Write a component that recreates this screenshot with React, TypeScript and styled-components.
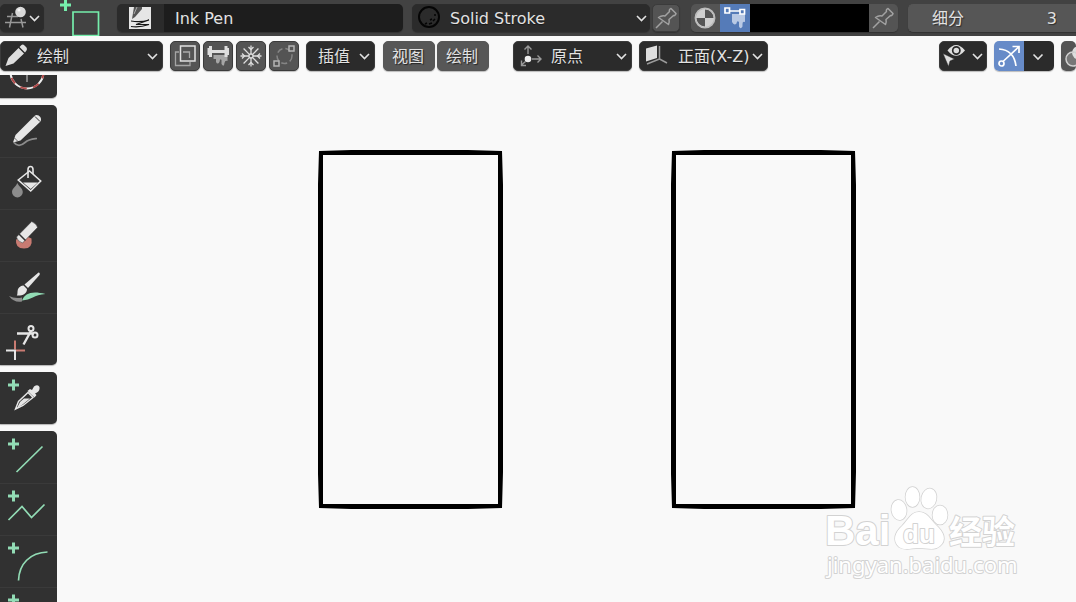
import React from "react";
import styled, { createGlobalStyle, css } from "styled-components";

const GlobalStyle = createGlobalStyle`
  *, *::before, *::after { box-sizing: border-box; }
  body { margin: 0; background: #f9f9f9; }
  body, button, input, select {
    font-family: "DejaVu Sans", "Noto Sans CJK SC", sans-serif;
    font-size: 16px;
    line-height: 20px;
  }
`;

/* ---------- layout ---------- */

const Page = styled.div`
  display: flex;
  flex-direction: column;
  height: 100vh;
  overflow: hidden;
  color: #e2e2e2;
`;

const TopBar = styled.header`
  display: flex;
  flex: none;
  align-items: flex-start;
  height: 36px;
  padding-top: 4px;
  background: #424242;
  overflow: hidden;
`;

const ViewHeader = styled.nav`
  display: flex;
  flex: none;
  align-items: flex-start;
  height: 39px;
  padding-top: 5px;
  overflow: hidden;
`;

const Cluster = styled.div<{ $gap?: number; $left?: number }>`
  display: flex;
  flex: none;
  gap: ${(p) => p.$gap ?? 0}px;
  margin-left: ${(p) => p.$left ?? 7}px;
`;

const RightCluster = styled(Cluster)`
  margin-left: auto;
`;

const Workspace = styled.div`
  display: flex;
  flex: 1;
  min-height: 0;
`;

const Toolbar = styled.aside`
  display: flex;
  flex: none;
  flex-direction: column;
  justify-content: flex-start;
  width: 57px;
  overflow: hidden;
`;

const ToolList = styled.div`
  display: flex;
  flex-direction: column;
  gap: 7px;
  margin-top: -29px;
`;

const ToolGroup = styled.div`
  display: flex;
  flex: none;
  flex-direction: column;
  background: #313131;
  border-radius: 0 5px 5px 0;
  box-shadow: 0 1px 1px #b4b4b4;
  overflow: hidden;
`;

const Tool = styled.button`
  display: block;
  height: 52px;
  padding: 0;
  border: 0;
  background: transparent;
  & + & { box-shadow: inset 0 1px 0 #3a3a3a; }
  svg { display: block; }
`;

const Viewport = styled.main`
  position: relative;
  flex: 1;
  min-width: 0;
`;

const Drawing = styled.svg`
  display: block;
  width: 100%;
  height: 100%;
`;

const Watermark = styled.svg`
  position: absolute;
  right: 52px;
  bottom: 16px;
`;

/* ---------- controls ---------- */

const frame = css`
  display: flex;
  align-items: center;
  flex: none;
  border: 1px solid #3b3b3b;
  border-radius: 5px;
  box-shadow: 0 1px 1px rgba(0, 0, 0, 0.25);
  overflow: hidden;
`;

const MenuBox = styled.label<{ $w: number; $h?: number; $flat?: boolean }>`
  ${frame}
  position: relative;
  width: ${(p) => p.$w}px;
  height: ${(p) => p.$h ?? 30}px;
  border-color: ${(p) => (p.$flat ? "#2c2c2c" : "#3b3b3b")};
  background: #2b2b2b;
  > svg { flex: none; pointer-events: none; }
`;

const Menu = styled.select<{ $pad: number }>`
  appearance: none;
  flex: 1;
  min-width: 0;
  height: 100%;
  padding: 2px 0 0 ${(p) => p.$pad}px;
  border: 0;
  background: transparent;
  color: #e2e2e2;
  text-shadow: 0 1px 1px rgba(0, 0, 0, 0.5);
  outline: 0;
`;

const IconButton = styled.button<{ $w?: number; $h?: number; $bg?: string }>`
  ${frame}
  justify-content: flex-start;
  width: ${(p) => p.$w ?? 30}px;
  height: ${(p) => p.$h ?? 30}px;
  padding: 0;
  background: ${(p) => p.$bg ?? "#545454"};
  svg { flex: none; margin: -1px; }
`;

const TextButton = styled.button`
  ${frame}
  justify-content: center;
  width: 52px;
  height: 30px;
  padding: 1px 2px 0 0;
  border-color: #575757;
  background: #575757;
  color: #e2e2e2;
  text-shadow: 1px 1px 1px rgba(0, 0, 0, 0.6);
`;

const Joined = styled.div<{ $w: number; $h?: number }>`
  ${frame}
  align-items: stretch;
  width: ${(p) => p.$w}px;
  height: ${(p) => p.$h ?? 28}px;
  border: 0;
`;

const Segment = styled.button<{ $w: number; $bg: string }>`
  display: flex;
  flex: none;
  align-items: center;
  width: ${(p) => p.$w}px;
  padding: 0;
  border: 0;
  background: ${(p) => p.$bg};
`;

const TextField = styled.input<{ $bg: string }>`
  flex: 1;
  min-width: 0;
  padding: 2px 11px 0;
  border: 0;
  background: ${(p) => p.$bg};
  color: #e2e2e2;
  outline: 0;
`;

const NumberField = styled.label`
  ${frame}
  flex: 1 0 168px;
  justify-content: space-between;
  height: 28px;
  margin-left: 10px;
  padding: 2px 19px 0 23px;
  border-color: #565656;
  border-right: 0;
  border-radius: 5px 0 0 5px;
  background: #565656;
  text-shadow: 1px 1px 1px rgba(0, 0, 0, 0.5);
`;

const NumberInput = styled.input`
  width: 60px;
  padding: 0;
  border: 0;
  background: transparent;
  color: inherit;
  text-align: right;
  text-shadow: inherit;
  outline: 0;
`;

/* ---------- icons ---------- */

const IconSvg = styled.svg`
  overflow: visible;
`;

type IconProps = { w?: number; h?: number; children: React.ReactNode };
const Icon = ({ w = 30, h = 30, children }: IconProps) => (
  <IconSvg width={w} height={h} viewBox={`0 0 ${w} ${h}`} fill="none" aria-hidden="true">
    {children}
  </IconSvg>
);

const Chevron = ({ w = 15 }: { w?: number }) => (
  <Icon w={w} h={28}>
    <path d="M1 12l4.500 4.500 4.500-4.500" stroke="#e2e2e2" strokeWidth="1.600" />
  </Icon>
);

const Pin = () => (
  <Icon h={28}>
    <path
      d="M4 24L10.500 17.500M6.500 13.500L16.500 20.500C17.500 18.500 17.500 17.500 17 15.500L21.500 11.500C22.500 12 23.500 11 24 9.500L19 4.500C17.500 5 17 6.500 17.500 7.500L13 12C11 11.300 8.500 12 6.500 13.500Z"
      stroke="#a2a2a2" strokeWidth="1.500" strokeLinejoin="round"
    />
  </Icon>
);

const Plus = ({ x = 13.5, y = 13 }: { x?: number; y?: number }) => (
  <path d={`M${x - 5.5} ${y}h11M${x} ${y - 5.5}v11`} stroke="#92dcb5" strokeWidth="3" />
);

const white = "#e6e6e6";
const grey = "#8c8c8c";
const red = "#c97b72";
const green = "#92dcb5";

const ToolIcon = ({ children }: { children: React.ReactNode }) => (
  <Icon w={57} h={52}>{children}</Icon>
);

const paintTools = [
  {
    name: "绘制",
    art: (
      <>
        <path d="M14 37.500C17 41.500 21 41 25 37.500C29 34 33 34 37 33.500" stroke={grey} strokeWidth="1.700" />
        <path d="M13 37.500L15.500 30 34.500 11C37 8 43 12.500 40.500 16.500L20.500 35.500Z" fill={white} />
        <path d="M35 11.500L40 16.500" stroke="#313131" />
        <path d="M14.500 33L17.500 36" stroke="#313131" strokeWidth=".7" />
      </>
    ),
  },
  {
    name: "填充",
    art: (
      <>
        <path d="M17.300 26C19 30 22.800 31 22.800 35A5.300 5.300 0 0 1 12 35C12 31 16 30 17.300 26Z" fill={grey} />
        <path d="M29.500 14L18.300 23 30.700 34 40.700 24Z" stroke={white} strokeWidth="1.600" />
        <path d="M23 25.500H38L30.700 32Z" fill={white} />
        <path d="M28 21V12.500C28 8.500 33 8.500 33 12.500V17" stroke={white} strokeWidth="1.600" />
      </>
    ),
  },
  {
    name: "擦除",
    art: (
      <>
        <path d="M16 30.500Q15 39.500 24 39.500Q33 39.500 31.500 29.500L28 28Z" fill={red} />
        <path d="M31.700 12.500Q37 15 37.500 18.500L22.500 34Q17 32 16.500 28Z" fill={white} stroke="#313131" strokeWidth=".5" />
        <path d="M19 25L25.500 31.500" stroke="#313131" strokeWidth="1.500" />
      </>
    ),
  },
  {
    name: "染色",
    art: (
      <>
        <path d="M9 35Q15 38 22 36.500V40.500Q14 42 9 35Z" fill={grey} />
        <path d="M22 39.500C25 32 32 29.500 45.500 33C34 34 31 39 22 39.500Z" fill={green} />
        <path d="M38.500 11.500Q40.500 12 39.500 14L28 27 24.500 23.500Z" fill={white} />
        <path d="M23.500 24.500L27 28C27 33 22 35 16.800 34.500C18 33 17 31 18 28Q20 24.500 23.500 24.500Z" fill={white} />
      </>
    ),
  },
  {
    name: "切割",
    art: (
      <>
        <path d="M17 20.500L34 20.500M23.500 31.500L31 18" stroke={white} strokeWidth="2.400" />
        <circle cx="31" cy="15.500" r="2.500" stroke={white} strokeWidth="2" />
        <circle cx="35" cy="22" r="2.500" stroke={white} strokeWidth="2" />
        <path d="M15 27.500v9M16 37.500h9" stroke={red} strokeWidth="2" />
        <path d="M6 37.500h9v9.500" stroke={white} strokeWidth="2" />
      </>
    ),
  },
];

const shapeTools = [
  { name: "直线", art: <path d="M16.500 41L42.500 15.500" stroke={green} strokeWidth="1.700" /> },
  { name: "折线", art: <path d="M8.500 37L22 23.500 31.500 34.500 44.500 21.500" stroke={green} strokeWidth="1.700" /> },
  { name: "弧线", art: <path d="M18.500 45.500C19 29 30 17.500 47.500 17" stroke={green} strokeWidth="1.700" /> },
  { name: "曲线", art: null },
];

/* A hand-drawn ink rectangle whose edges swell slightly between corners. */
const InkFrame = ({ x }: { x: number }) => (
  <path
    transform={`translate(${x} 75)`}
    fillRule="evenodd"
    d="M1 1L33 0H150L184 1 185 35V322L184 358 150 359H33L1 358 0 324V34ZM5 5V354H180V5Z"
  />
);

export default function App() {
  return (
    <Page>
      <GlobalStyle />
      <TopBar>
        <MenuBox $w={44} $h={28} $flat>
          <Icon w={27} h={28}>
            <path d="M6 12.500H17M4 18.500H25M11.500 9L8.500 23.500M20 15L22 23.500" stroke="#989898" strokeWidth="1.500" />
            <circle cx="19.500" cy="8" r="5.300" fill="#d8d8d8" />
            <circle cx="18" cy="6" r="1.500" fill="#f5f5f5" />
          </Icon>
          <Menu $pad={0} aria-label="编辑器类型"><option aria-label="3D" /></Menu>
          <Chevron w={14} />
        </MenuBox>
        <Cluster $left={15}>
          <Icon w={42} h={32}>
            <path d="M1 1h11M6.500 -5v12" stroke="#76eeac" strokeWidth="3" />
            <path d="M14 34V8H39.500V31.500H14" stroke="#76eeac" strokeWidth="1.700" />
          </Icon>
        </Cluster>
        <Cluster $left={16}>
          <Joined $w={286}>
            <Segment $w={47} $bg="#2b2b2b" aria-label="笔刷">
              <Icon w={46} h={28}>
                <path d="M12 3H34V25H12Z" fill="#e6e6e6" />
                <path d="M17 3L15.500 12 15 15 18 13 25 5V3Z" fill="#555" />
                <path d="M20 3L17 10" stroke="#aaa" />
                <path d="M14 17Q24 18.500 32 16L19 20.500 32 20.500Q22 24 14 22.500" stroke="#151515" strokeWidth="1.200" />
              </Icon>
            </Segment>
            <TextField $bg="#1d1d1d" aria-label="笔刷名称" defaultValue="Ink Pen" />
          </Joined>
        </Cluster>
        <Cluster $left={9} $gap={2}>
          <MenuBox $w={238} $h={28} $flat>
            <Icon w={32} h={28}>
              <circle cx="16" cy="13" r="10" stroke="#050505" strokeWidth="2" />
              <path d="M12 20l2-1M16 20l3-1M20 17l2-2M22 12v-2M17 16l2-1" stroke="#050505" strokeWidth="1.500" />
            </Icon>
            <Menu $pad={5} aria-label="材质"><option>Solid Stroke</option></Menu>
            <Chevron w={13} />
          </MenuBox>
          <IconButton $w={28} $h={28} aria-label="固定材质"><Pin /></IconButton>
        </Cluster>
        <Cluster $left={11}>
          <Joined $w={207}>
            <Segment $w={29} $bg="#545454" aria-label="材质颜色">
              <Icon w={29} h={28}>
                <circle cx="14" cy="14" r="9.500" fill="#cfcfcf" />
                <path d="M14 14V5.500A8.500 8.500 0 0 1 22.500 14ZM14 14V22.500A8.500 8.500 0 0 1 5.500 14Z" fill="#555" />
                <circle cx="14" cy="14" r="9.700" stroke="#bcbcbc" strokeWidth="1.500" />
              </Icon>
            </Segment>
            <Segment $w={30} $bg="#557bb8" aria-label="顶点颜色">
              <Icon h={28}>
                <path d="M12 10H25V18Q22.500 17 22.500 20V22.500Q20.500 26 19 22.500V18Q17 16 16.500 19.500Q14 22 12 18Z" fill="#b9c9e4" />
                <path d="M10 7H20" stroke="#fff" strokeWidth="1.500" />
                <path d="M5 4H9.500V9H5ZM20 5.500H24.500V10H20Z" fill="#557bb8" stroke="#fff" strokeWidth="1.700" />
              </Icon>
            </Segment>
            <TextField $bg="#000" aria-label="颜色" defaultValue="" />
            <Segment $w={29} $bg="#545454" aria-label="固定颜色"><Pin /></Segment>
          </Joined>
        </Cluster>
        <NumberField>
          细分
          <NumberInput defaultValue="3" />
        </NumberField>
      </TopBar>

      <ViewHeader>
        <MenuBox $w={163}>
          <Icon w={31}>
            <path d="M4.500 25L7.500 17 17.500 7 23 12.500 12.500 22.500ZM18.500 6L20.500 4Q22 3 23.500 4.500L25.500 6.500Q26.500 8 25.500 9.500L24 11.500Z" fill="#dedede" />
          </Icon>
          <Menu $pad={5} aria-label="模式"><option>绘制</option></Menu>
          <Chevron />
        </MenuBox>
        <Cluster $gap={3}>
          <IconButton aria-label="叠加绘制">
            <Icon>
              <path d="M9 11H5.500V24.500H20V21" stroke="#a5a5a5" strokeWidth="1.300" />
              <path d="M10.500 5H25V20H10.500Z" stroke="#e0e0e0" strokeWidth="1.500" />
              <path d="M13 11H19.500V17" stroke="#aaa" strokeWidth="1.300" />
            </Icon>
          </IconButton>
          <IconButton aria-label="自动合并">
            <Icon>
              <path d="M10.500 14H24.500V20Q22 19 21.500 22Q21 27 18.500 23V19Q17 17 16.500 21Q14.500 24 13 21V18H10.500Z" fill="#a5a5a5" />
              <path d="M4.500 7H6V5H9V9H21.500V5H24.500V7H26V14H24.500V16H21.500V12H9V16H6V14H4.500Z" fill="#dedede" />
            </Icon>
          </IconButton>
          <IconButton aria-label="权重">
            <Icon>
              <g stroke="#dedede" strokeWidth="1.300">
                {[0, 45, 90, 135, 180, 225, 270, 315].map((a) => (
                  <path key={a} transform={`rotate(${a} 15 15)`} d="M15 13V4.500" />
                ))}
                {[0, 90, 180, 270].map((a) => (
                  <path key={a} transform={`rotate(${a} 15 15)`} d="M12.500 6L15 8.500 17.500 6" />
                ))}
                <circle cx="15" cy="15" r="2" />
              </g>
            </Icon>
          </IconButton>
          <IconButton aria-label="多帧编辑">
            <Icon>
              <circle cx="15.500" cy="15" r="7.500" stroke="#858585" strokeWidth="1.500" strokeDasharray="6 3" />
              <path d="M20 5H25V10H20ZM5 20H10V25H5Z" fill="#545454" stroke="#b4b4b4" strokeWidth="1.500" />
            </Icon>
          </IconButton>
        </Cluster>
        <Cluster>
          <MenuBox $w={69}>
            <Menu $pad={11} aria-label="插值"><option>插值</option></Menu>
            <Chevron />
          </MenuBox>
        </Cluster>
        <Cluster $left={8} $gap={2}>
          <TextButton>视图</TextButton>
          <TextButton>绘制</TextButton>
        </Cluster>
        <Cluster $left={24} $gap={7}>
          <MenuBox $w={119}>
            <Icon w={32}>
              <path d="M14 13V5M10.500 8.500L14 5 17.500 8.500M18 18H27M23.500 14.500L27 18 23.500 21.500M11.500 20.500L7.500 24M7.500 19.500V24.500H12" stroke="#999" strokeWidth="1.400" />
              <circle cx="14" cy="18" r="3.300" fill="#ededed" />
            </Icon>
            <Menu $pad={5} aria-label="笔画位置"><option>原点</option></Menu>
            <Chevron />
          </MenuBox>
          <MenuBox $w={129}>
            <Icon w={32}>
              <path d="M19.500 5V18L27 22M19.500 18L7 23" stroke="#999" strokeWidth="1.500" />
              <path d="M6 7.500L17 4.500V17L6 20.500Z" fill="#dedede" />
            </Icon>
            <Menu $pad={6} aria-label="绘制平面"><option>正面(X-Z)</option></Menu>
            <Chevron />
          </MenuBox>
        </Cluster>
        <RightCluster $gap={7}>
          <MenuBox $w={48}>
            <Icon w={28}>
              <path d="M7.500 9.500Q16 -1.500 25 9.500Q16 20 7.500 9.500Z" fill="#dedede" />
              <circle cx="16.300" cy="9.500" r="3.600" fill="#dedede" stroke="#2b2b2b" strokeWidth="1.700" />
              <path d="M3 12.500L14.500 18 10 20 8.500 25.500Z" fill="#dedede" stroke="#2b2b2b" strokeWidth=".5" />
            </Icon>
            <Menu $pad={0} aria-label="可见性"><option aria-label="全部" /></Menu>
            <Chevron w={14} />
          </MenuBox>
          <Joined $w={60} $h={30}>
            <Segment $w={30} $bg="#678bc8" aria-label="显示操作项">
              <Icon>
                <path d="M5 8Q20 9 22 25M9 20.500L24.500 6M18.500 5.500H25V12" stroke="#fff" strokeWidth="1.700" />
                <circle cx="7.500" cy="22.500" r="2.500" stroke="#fff" strokeWidth="1.700" />
              </Icon>
            </Segment>
            <Segment $w={30} $bg="#2b2b2b" aria-label="操作项选项">
              <Icon h={28}><path d="M9.500 12.500l4.500 4.500 4.500-4.500" stroke="#e2e2e2" strokeWidth="1.600" /></Icon>
            </Segment>
          </Joined>
          <Joined $w={15} $h={30}>
            <Segment $w={30} $bg="#545454" aria-label="显示叠加层">
              <Icon>
                <circle cx="18" cy="12" r="7" fill="#dedede" />
                <circle cx="12" cy="18" r="7" fill="#777" stroke="#cfcfcf" strokeWidth="1.500" />
                <path d="M11 11.500A7 7 0 0 0 18.500 18.500Q19 12 11 11.500Z" fill="#dedede" />
              </Icon>
            </Segment>
          </Joined>
        </RightCluster>
      </ViewHeader>

      <Workspace>
        <Toolbar>
          <ToolList>
            <ToolGroup>
              <Tool aria-label="游标">
                <ToolIcon>
                  <circle cx="27" cy="26" r="16.500" stroke="#eee" strokeWidth="2" />
                  <circle cx="27" cy="26" r="16.500" stroke="#b04a4a" strokeWidth="2" strokeDasharray="6.500 6.500" />
                  <path d="M27 20V36" stroke="#aaa" strokeWidth="1.300" />
                </ToolIcon>
              </Tool>
            </ToolGroup>
            <ToolGroup>
              {paintTools.map((t) => (
                <Tool key={t.name} aria-label={t.name}><ToolIcon>{t.art}</ToolIcon></Tool>
              ))}
            </ToolGroup>
            <ToolGroup>
              <Tool aria-label="吸管">
                <ToolIcon>
                  <Plus />
                  <path d="M15.500 37L18.500 29.500 28 20.500 33 25.500 23 33.500Z" stroke={white} strokeWidth="1.400" />
                  <path d="M17 36L20 30 24 26.500H30L22 33Z" fill={white} />
                  <path d="M27.500 19L30 17 32 18 34 14.500Q38 12 39.500 15Q40 18.500 37 20.500L35 21.500 36.500 23 34.500 25.500Z" fill={white} />
                </ToolIcon>
              </Tool>
            </ToolGroup>
            <ToolGroup>
              {shapeTools.map((t) => (
                <Tool key={t.name} aria-label={t.name}>
                  <ToolIcon><Plus />{t.art}</ToolIcon>
                </Tool>
              ))}
            </ToolGroup>
          </ToolList>
        </Toolbar>

        <Viewport>
          <Drawing role="img" aria-label="两个矩形">
            <InkFrame x={261} />
            <InkFrame x={614} />
          </Drawing>
          <Watermark width="204" height="104" viewBox="0 0 204 104" fill="#fff" stroke="#d2d2d2" strokeWidth="2" strokeLinejoin="round" paintOrder="stroke">
            <text x="5" y="63" fontSize="42" fontFamily="'Liberation Sans', sans-serif" fontWeight="700">Bai</text>
            <g strokeWidth="1.500">
              <ellipse cx="79" cy="28" rx="7.500" ry="10" transform="rotate(-8 79 28)" />
              <ellipse cx="92.500" cy="15" rx="7" ry="10" />
              <ellipse cx="109" cy="16.500" rx="7.500" ry="10" transform="rotate(12 109 16)" />
              <ellipse cx="120" cy="33" rx="7.500" ry="9.500" />
              <path d="M99 30C107 30 110 37 116 43C124 50 127 58 120 64C114 69 108 66 99 66C91 66 85 69 79 65C72 59 75 50 82 44C88 38 91 30 99 30Z" />
            </g>
            <text x="83" y="61" fontSize="26" fontFamily="'Liberation Sans', sans-serif" fontWeight="700">du</text>
            <text x="129" y="62" fontSize="33" fontFamily="'Noto Sans CJK SC', sans-serif" fontWeight="700">经验</text>
            <text x="7" y="91" fontSize="22" fontFamily="'Noto Sans', sans-serif" fontWeight="400">jingyan.baidu.com</text>
          </Watermark>
        </Viewport>
      </Workspace>
    </Page>
  );
}
